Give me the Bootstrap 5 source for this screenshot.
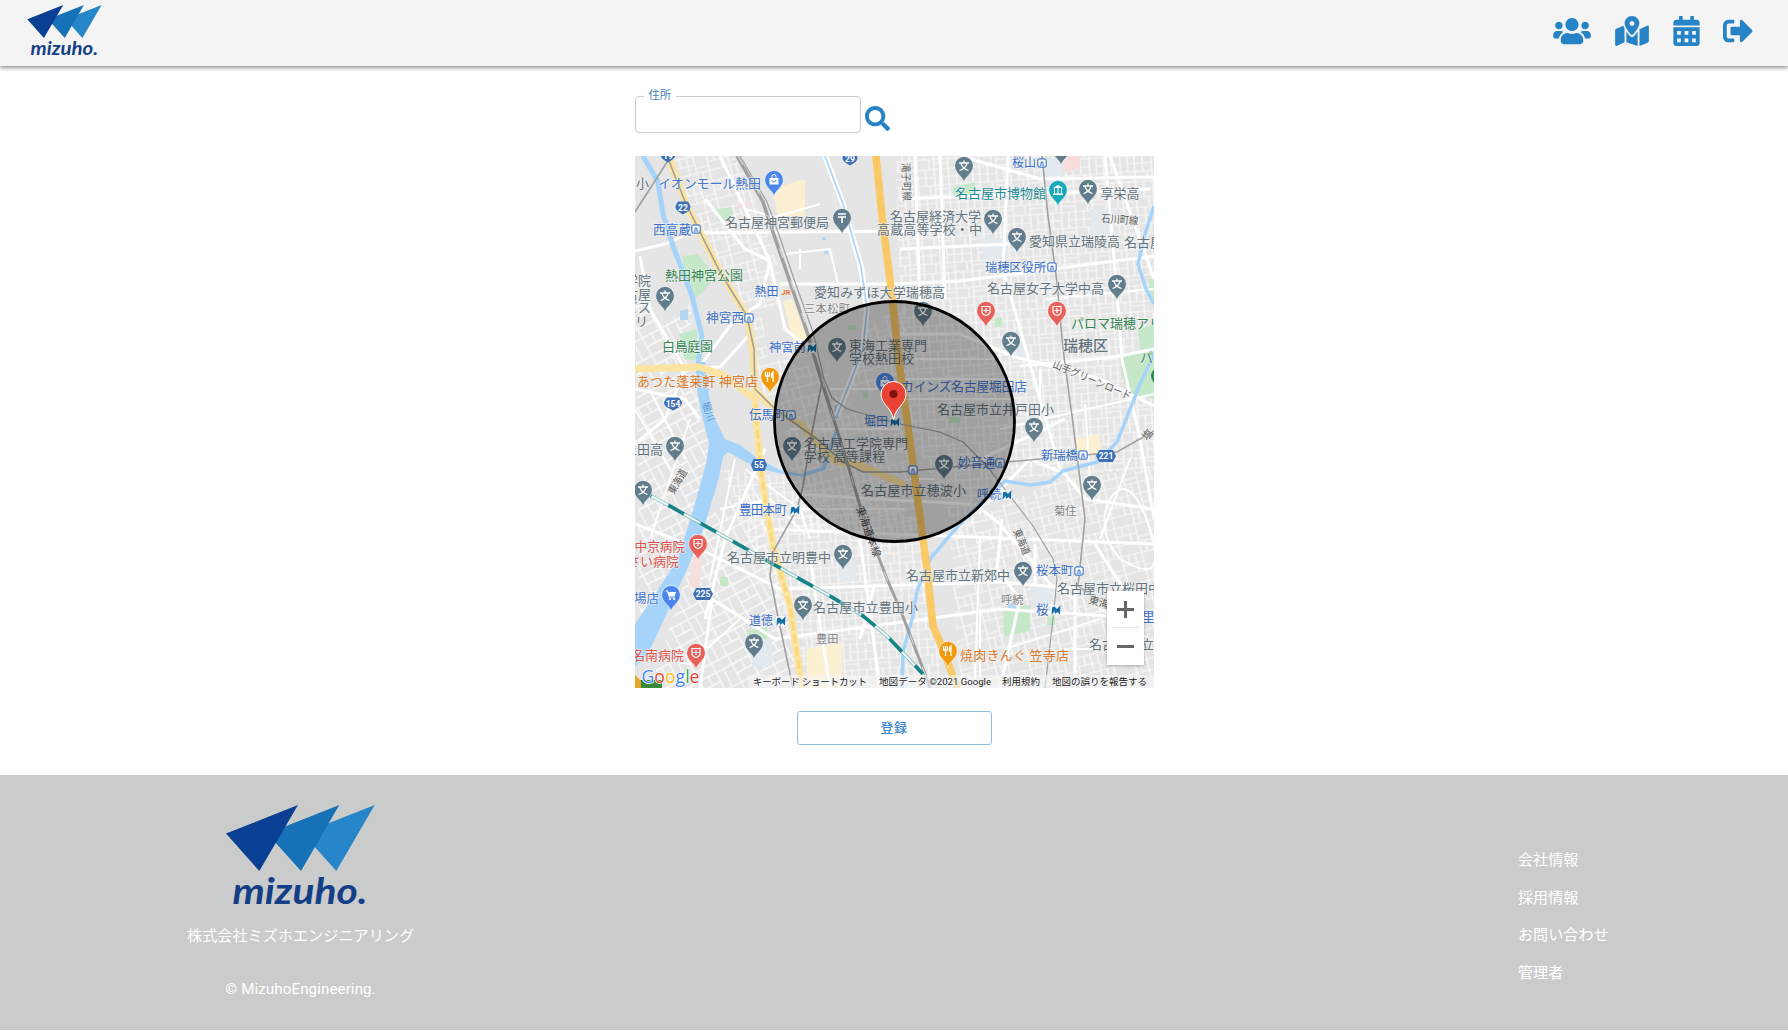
<!DOCTYPE html>
<html lang="ja">
<head>
<meta charset="utf-8">
<meta name="viewport" content="width=device-width, initial-scale=1">
<title>mizuho.</title>
<link rel="stylesheet" href="https://cdn.jsdelivr.net/npm/bootstrap@5.3.0/dist/css/bootstrap.min.css">
<style>
body{font-family:Roboto,"Noto Sans CJK JP",sans-serif;background:#fff;min-height:100vh}
.site-head{height:66px;background:#f4f4f4;box-shadow:0 2px 4px rgba(0,0,0,.42);padding:5px 35px 0 27px}
.site-head nav{gap:24px;padding-top:11px}
.site-head nav a:last-child{margin-left:-1px}
.site-head nav svg,.find-btn svg{display:block;fill:#2683c6}
.site-head nav svg{height:30px}
.site-main{width:519px;height:709px;padding-top:30px}
.addr{width:226px;height:37px;margin:0;min-width:0}
.addr fieldset{border:1px solid #ccc;border-radius:4px;height:43px;margin-top:-6px;padding:0 8px;min-width:0}
.addr legend{float:none;width:auto;font-size:11.3px;line-height:12px;height:12px;padding:0 5px;margin:0;color:#3c80bd}
.addr input{display:block;width:100%;height:28px;border:0;outline:0;background:transparent}
.find-btn{margin:10px 0 0 4px;padding:0;border:0;background:none}
.map-box{height:532px;margin-top:23px}
.map-box>svg{display:block}
.map-zoom{right:10px;bottom:23px;width:37px;height:74px;background:#fff;box-shadow:0 1px 3px rgba(0,0,0,.28)}
.map-zoom button{border:0;background:none;height:37px;padding:0}
.map-zoom button+button:before{content:"";position:absolute;left:5px;right:5px;top:36px;border-top:1px solid #e6e6e6}
.save-btn{width:195px;height:34px;margin-top:22.5px;border:1px solid #8fbde3;border-radius:3px;background:#fff;color:#3b86ca;font-size:13px;font-weight:500;letter-spacing:.6px;padding:0}
.site-foot{height:255px;background:#cacccb;color:#fff;padding:30px 0 0 187px}
.site-foot p{font-size:15.15px;line-height:24px}
.foot-name{margin-top:18px}
.foot-copy{margin-top:29px;letter-spacing:.09px}
.foot-menu{width:270px;padding-top:43px}
.foot-menu a{color:#fff;font-size:15.1px;line-height:24px;height:37.7px;text-decoration:none}
.lb{font:400 13px Roboto,"Noto Sans CJK JP",sans-serif;fill:#64747d;stroke:#f3f3f3;stroke-opacity:.6;stroke-width:1.8px;paint-order:stroke;stroke-linejoin:round}
.lb .st{fill:#3b70c6;font-size:12.6px}.lb .gr{fill:#348553}.lb .sh{fill:#4478d0}.lb .fd{fill:#d9792c}.lb .hp{fill:#d9534c}.lb .tl{fill:#1f8c98}
.lb .in{stroke-opacity:0}
.lb .rd{font-size:10.5px;fill:#606060}.lb .ar{font-size:11.3px;fill:#858585}.lb .wd{font-size:15px;font-weight:500}
.wy{fill:none;stroke:#fff;stroke-linejoin:round}
.rl{fill:none;stroke:#a0a0a0;stroke-width:1.6}
.wt{fill:none;stroke:#a6d3fa;stroke-linejoin:round}
.att{font:400 9.5px Roboto,"Noto Sans CJK JP",sans-serif;fill:#222;stroke:#f5f5f5;stroke-width:1.5px;paint-order:stroke}
.rt{font:bold 8.5px Roboto,sans-serif;fill:#fff;text-anchor:middle}
</style>
<script src="https://cdn.jsdelivr.net/npm/bootstrap@5.3.0/dist/js/bootstrap.bundle.min.js"></script>
</head>
<body class="d-flex flex-column">
<svg width="0" height="0" class="position-absolute" aria-hidden="true">
<defs>
<symbol id="logo" viewBox="0 0 149 101">
<path fill="#2785ca" d="M76.7 28.6 148.7 0 110.3 66z"/><path fill="#1671b7" d="M41.3 28.6 113.3 0 75 66z"/><path fill="#0a3f93" d="M0 28.6 72 0 33.3 66z"/>
<text x="6.500" y="99" textLength="135" lengthAdjust="spacingAndGlyphs" style="font:italic 700 37px Lato,sans-serif" fill="#143f88">mizuho.</text>
</symbol>
<path id="pin" d="M0 16.5C-1.2 10-9.3 7.500-9.300-.3A9.300 9.300 0 0 1 9.300-.3C9.300 7.500 1.200 10 0 16.500z" stroke="#fff" stroke-width=".6"/>
<g id="sc"><use href="#pin" fill="#627d8b"/><path d="M0-5.500V-3M-5-3H5M-3-2.500C-2 1 1 3.500 4.500 4.500M3-2.500C2 1-1 3.500-4.500 4.500" fill="none" stroke="#fff" stroke-width="1.300"/></g>
<g id="ho"><use href="#pin" fill="#e8605a"/><path d="M-4-4.500H4V1.500Q3 4 0 4.500Q-3 4-4 1.500zM0-3V2M-2.500-.5H2.500" fill="none" stroke="#fff" stroke-width="1.200"/></g>
<g id="fo"><use href="#pin" fill="#f29a0c"/><path d="M-2.500-5V5M-4.500-5V-1H-.5V-5M3 5V-5Q1-3 1.500 0H3" fill="none" stroke="#fff" stroke-width="1.300"/></g>
<g id="bg"><use href="#pin" fill="#4c86ea"/><path d="M-4.500-2H4.500V4.500H-4.500z" fill="#fff"/><path d="M-2-2V-3.500A2 2 0 0 1 2-3.500V-2" fill="none" stroke="#fff"/><path d="M-2 0A2 2 0 0 0 2 0" fill="none" stroke="#4c86ea"/></g>
<g id="ca"><use href="#pin" fill="#4c86ea"/><path d="M-5.500-4H-3.500L-1.500 2H4" fill="none" stroke="#fff" stroke-width="1.200"/><path d="M-3-3H5L3.500 1H-1.800z" fill="#fff"/><circle cx="-1" cy="4" r="1.100" fill="#fff"/><circle cx="3" cy="4" r="1.100" fill="#fff"/></g>
<g id="po"><use href="#pin" fill="#627d8b"/><path d="M-4-4H4M-4-1H4M0-1V5" fill="none" stroke="#fff" stroke-width="1.600"/></g>
<g id="mu"><use href="#pin" fill="#18aabb"/><path d="M-5-2 0-5 5-2zM-5 3.500H5V5H-5z" fill="#fff"/><path d="M-3.500-2V4M0-2V4M3.500-2V4" stroke="#fff"/></g>
<g id="su"><rect x="-4.200" y="-4.200" width="8.400" height="8.400" rx="2" fill="#fff" stroke="#4a7ccc" stroke-width="1.200"/><path d="M-2.300 2.300H-1V-.3A1.200 1.200 0 0 1 1-.3V2.300H2.300" fill="none" stroke="#4a7ccc" stroke-width="1.100"/></g>
<g id="me"><path d="M-5-5H5V5H-5z" fill="#fff" fill-opacity=".7"/><path d="M-4-2.500-1.500-3.500 1-1 4.500-5 4 4.500 1.500 2-1 4 -1.500 1-4.500 5z" fill="#1571a5"/></g>
<path id="sd" d="M-5-6.500H5L7.500-2Q7.500 2 4 4L0 6.500-4 4Q-7.500 2-7.500-2z" fill="#3d70b7"/>
<path id="hx" d="M-8 0-5.500-6H5.500L8 0 5.500 6H-5.500z" fill="#3d70b7"/>
<pattern id="ga" width="31" height="26" patternUnits="userSpaceOnUse" patternTransform="translate(3 0) rotate(-4)"><path d="M0 1H31M0 9H18M0 17H31M18 21H31M1 0V26M9 1V17M18 0V26M25 0V17M13 17V26M25 9H31" fill="none" stroke="#fafafa" stroke-width="1.200"/></pattern>
<pattern id="gb" width="34" height="29" patternUnits="userSpaceOnUse" patternTransform="rotate(-14)"><path d="M0 1H34M0 10H22M0 19H34M22 14H34M1 0V29M8 1V10M15 0V19M22 0V29M28 19V29" fill="none" stroke="#fafafa" stroke-width="1.200"/></pattern>
<pattern id="gc" width="37" height="30" patternUnits="userSpaceOnUse" patternTransform="rotate(-28)"><path d="M0 1H37M0 11H20M0 21H37M1 0V30M11 0V11M20 0V30M28 1V21" fill="none" stroke="#fafafa" stroke-width="1.300"/></pattern>
</defs>
</svg>

<header class="site-head d-flex justify-content-between align-items-start position-relative">
<a href="#" aria-label="mizuho"><svg class="d-block" width="75" height="50.500"><use href="#logo"/></svg></a>
<nav class="d-flex">
<a href="#"><svg viewBox="0 0 640 512" width="38"><path d="M96 224c35.300 0 64-28.700 64-64s-28.700-64-64-64-64 28.700-64 64 28.700 64 64 64zm448 0c35.300 0 64-28.700 64-64s-28.700-64-64-64-64 28.700-64 64 28.700 64 64 64zm32 32h-64c-17.600 0-33.500 7.100-45.100 18.600 40.300 22.100 68.900 62 75.100 109.400h66c17.700 0 32-14.300 32-32v-32c0-35.300-28.700-64-64-64zm-256 0c61.900 0 112-50.100 112-112S381.900 32 320 32 208 82.100 208 144s50.100 112 112 112zm76.800 32h-8.300c-20.800 10-43.900 16-68.500 16s-47.600-6-68.500-16h-8.300C179.600 288 128 339.600 128 403.200V432c0 26.500 21.500 48 48 48h288c26.500 0 48-21.500 48-48v-28.800c0-63.600-51.600-115.200-115.200-115.200zm-223.700-13.400C161.500 263.100 145.600 256 128 256H64c-35.300 0-64 28.700-64 64v32c0 17.700 14.300 32 32 32h65.900c6.300-47.400 34.900-87.300 75.200-109.400z"/></svg></a>
<a href="#"><svg viewBox="0 0 576 512" width="34"><path d="M288 0c-69.590 0-126 56.410-126 126 0 56.260 82.350 158.800 113.900 196.020 6.390 7.540 17.820 7.540 24.200 0C331.650 284.800 414 182.260 414 126 414 56.410 357.590 0 288 0zm0 168c-23.200 0-42-18.800-42-42s18.800-42 42-42 42 18.800 42 42-18.800 42-42 42zM20.120 215.950A32.006 32.006 0 0 0 0 245.660v250.320c0 11.320 11.430 19.060 21.940 14.860L160 448V214.920c-8.840-15.980-16.070-31.540-21.250-46.420L20.120 215.950zM288 359.670c-14.070 0-27.380-6.180-36.510-16.960-19.660-23.200-40.570-49.620-59.490-76.720v182l192 64V266c-18.920 27.090-39.820 53.520-59.490 76.720-9.130 10.770-22.440 16.950-36.510 16.950zm266.060-198.510L416 224v288l139.880-55.950A31.996 31.996 0 0 0 576 426.340V176.020c0-11.320-11.430-19.060-21.940-14.860z"/></svg></a>
<a href="#"><svg viewBox="0 0 448 512" width="27"><path fill-rule="evenodd" d="M0 464c0 26.500 21.500 48 48 48h352c26.500 0 48-21.500 48-48V192H0zM64 256h64v64H64zm128 0h64v64h-64zm128 0h64v64h-64zM64 384h64v64H64zm128 0h64v64h-64zm128 0h64v64h-64zM400 64h-48V16c0-8.800-7.200-16-16-16h-32c-8.800 0-16 7.200-16 16v48H160V16c0-8.800-7.200-16-16-16h-32c-8.800 0-16 7.200-16 16v48H48C21.500 64 0 85.500 0 112v48h448v-48c0-26.500-21.500-48-48-48z"/></svg></a>
<a href="#"><svg viewBox="0 0 512 512" width="30"><path d="M497 273L329 441c-15 15-41 4.500-41-17v-96H152c-13.300 0-24-10.700-24-24v-96c0-13.300 10.700-24 24-24h136V88c0-21.400 25.900-32 41-17l168 168c9.300 9.400 9.300 24.600 0 34zM192 436v-40c0-6.600-5.400-12-12-12H96c-17.700 0-32-14.300-32-32V160c0-17.700 14.300-32 32-32h84c6.600 0 12-5.400 12-12V76c0-6.600-5.400-12-12-12H96c-53 0-96 43-96 96v192c0 53 43 96 96 96h84c6.600 0 12-5.400 12-12z"/></svg></a>
</nav>
</header>

<main class="site-main mx-auto d-flex flex-column flex-shrink-0">
<form class="d-flex align-items-start">
<label class="addr"><fieldset><legend>住所</legend><input type="text" aria-label="住所"></fieldset></label>
<button type="button" class="find-btn" aria-label="検索"><svg viewBox="0 0 512 512" width="25" height="25"><path d="M505 442.700L405.300 343c-4.500-4.500-10.600-7-17-7H372c27.600-35.300 44-79.700 44-128C416 93.100 322.900 0 208 0S0 93.100 0 208s93.100 208 208 208c48.300 0 92.700-16.400 128-44v16.300c0 6.400 2.500 12.500 7 17l99.700 99.700c9.400 9.400 24.600 9.400 33.900 0l28.300-28.300c9.400-9.400 9.400-24.600.1-34zM208 336c-70.700 0-128-57.200-128-128 0-70.700 57.200-128 128-128 70.700 0 128 57.200 128 128 0 70.700-57.200 128-128 128z"/></svg></button>
</form>

<div class="map-box position-relative overflow-hidden flex-shrink-0">
<svg width="519" height="532" viewBox="635 157 519 532">
<rect x="635" y="157" width="519" height="532" fill="#e5e5e5"/>
<!-- small streets -->
<path fill="url(#ga)" d="M895 157H1154V470L1010 480 960 540 905 420zM720 470 800 480 920 520 945 689H810z"/>
<path fill="url(#gb)" d="M672 157H740L790 300 820 400 760 400 745 310 690 210zM780 400 905 300 920 540 800 530zM950 530 1060 480 1154 470V689H960z"/>
<path fill="url(#gc)" d="M635 280 690 300 700 420 720 450 640 640zM705 520 760 480 800 689H650z"/>
<!-- blocks, parks and campuses -->
<g fill="#e5e5e5"><path d="M776 240 838 235 860 283H792zM800 170 828 168 842 225H778zM640 255 672 250 694 300 660 330 642 290zM760 310 785 305 803 345 770 365zM825 345 860 340 850 400 832 395zM850 395 890 390V420L850 410z"/></g>
<g fill="#fbf1d2"><path d="M772 190 805 180V217H778zM806 650 842 643V689H808zM783 303 792 300 812 350 798 358zM1075 440 1100 435V455H1075z"/></g>
<g fill="#e2e9ef"><path d="M980 240H1008V258L985 262zM1090 210H1115V235H1090zM1010 345 1028 340V362H1012zM1030 583 1050 585V605H1032zM840 565 855 562V582H840zM750 635 772 632V667H752zM1045 160H1062V177H1045z"/></g>
<g fill="#c5e8c9"><path d="M682 257 697 255 716 277 704 292 694 300 687 285zM716 210 732 208V220L718 222zM679 335 697 330 698 362 684 360zM1122 357 1154 352V400L1130 395 1121 375zM1138 330 1154 325V352H1140zM1003 610 1030 606V632L1004 638zM953 188 975 183V197H953zM720 578H728V587H720zM1047 618 1055 617V626H1047zM747 632 767 628V640H747zM1149 280H1154V300H1149zM995 320 1002 318V328H995zM848 326H856V331H848zM949 418H960V424H949zM863 393H868V400H863z"/></g>
<g fill="#f7dedd"><path d="M1063 157H1080V170L1065 173zM693 556 703 552 699 590 689 587zM738 205 750 202V207L738 210z"/></g>
<g fill="#b0d6f4"><path d="M680 312 688 310V321H680zM822 238H826V241H822zM824 252H828V255H824zM1008 607Q1013 600 1016 607T1008 610M834 407 842 403 840 418 835 420z"/></g>
<!-- main streets -->
<g class="wy" stroke-width="3">
<path d="M635 252 665 245 690 234 905 232M780 285H893L960 282 1154 257M705 200 745 250 770 262 785 330 810 350M720 157 770 262 760 305 735 320 700 367M640 257 650 310 685 370 665 420 635 445M635 525 700 550 780 590 1000 583 1080 590M705 620 725 540 765 450M765 530 1154 545M1105 157 1115 270 1122 360 1140 440 1154 520M960 157 1040 180 1154 178M900 335 960 335 1015 358 1100 380 1154 407M1020 367 1115 358 1154 350M1008 157 1003 270 1030 365 1060 470M690 370 720 368 750 335M990 502 1030 460 1065 475 1085 500 1154 510M975 505 1000 525 1050 585 1075 600M800 495 875 500 970 505M810 560 830 689M860 540 880 689M700 689 712 600 775 640 1000 610 1154 620M960 470 1065 420M1075 590 1075 689M1095 545 1130 600M1002 520 997 570 1020 600 1000 689M635 390 685 400 700 420M900 200 1150 190M900 250 1010 245M1110 157 1154 280M940 157 945 300M915 157 920 305M1035 545V585M875 585 860 640"/>
</g>
<g class="wy" stroke-width="2"><path d="M1045 300 1154 290M1000 430 1154 395M1100 610 1150 640M980 540 975 680M1110 500Q1130 470 1150 530T1120 560Q1095 530 1110 500M1005 650 1100 620M980 610V689M1130 460 1100 540M635 410 670 470M652 395 685 460M650 540 690 420M735 460 710 580M745 470 800 510 810 540M635 655 690 665 740 620M720 510 770 500 800 530M820 205 775 218 745 210M785 255 830 250 838 285M800 270V250M935 480 910 480M1085 405 1090 480M1040 370V430M1060 650H1100M900 380H1010M905 400H1010M910 360H995M790 430H900M780 450H910M830 390H890M800 510H905"/></g>
<!-- water -->
<path class="wt" stroke-width="5" d="M643 157 658 183 663 215 673 247 692 297 702 337 698 367 703 410"/>
<path fill="#a6d3fa" d="M696 363H705L711 412 725 440 740 446 757 459 780 471 800 475 822 468 835 430 838 432 825 471 803 478 778 474 755 468 728 453 723 458 718 482 702 535 684 577 648 655 635 668V625L652 600 678 560 692 515 706 465 709 445 701 412 697 390z"/>
<path class="wy" stroke-width="6" d="M825 157 843 205 861 268 867 310 863 350 837 417"/>
<path class="wt" stroke-width="1.600" d="M825 157 843 205 861 268 867 310 863 350 837 417"/>
<path class="wt" stroke-width="3.500" d="M1127 418 1117 443 1097 463 1063 472 1050 483 1030 486 1005 482 985 500 957 528 930 560 917 592 912 620 903 653 902 689M1154 207 1145 235 1138 265 1146 290 1154 305M1154 355 1140 385 1127 418"/>
<!-- trunk roads -->
<g fill="none" stroke-linejoin="round">
<path stroke="#fbe3a0" stroke-width="7" d="M668 157 687 207 720 273 747 317 753 350 755 390 775 412 800 425 835 462 862 467 905 486M635 370 700 368 725 377 755 400 756 420 762 480 773 547 790 607 802 689"/>
<path stroke="#fad87e" stroke-width="3" stroke-dasharray="9 4" d="M756 405V420L762 480 773 547 790 607 802 689"/>
<path stroke="#fbcb69" stroke-width="7.500" d="M876 157 882 217 892 297 899 363 907 420 918 503 927 570 933 627 945 655 957 689"/>
<path stroke="#f3bc50" stroke-width="7.500" stroke-dasharray="14 7" stroke-opacity=".2" d="M876 157 882 217 892 297 899 363 907 420 918 503 927 570 933 627 945 655 957 689"/>
</g>
<!-- railways -->
<g class="rl">
<path d="M667 157 686 205 720 273 747 317 754 350 755 390 773 408 793 423 817 440 843 463 863 473 900 473 1007 463 1117 453 1154 432M669 160 635 213"/>
<path stroke-width="3.500" d="M737 157 763 203 773 233 790 283 807 333 820 377 832 415"/>
<path stroke-width="1.200" d="M740 157 767 203 778 233 795 283 813 333 824 380 832 399 847 410 895 424 940 433 963 443 987 467 1007 493 1033 527 1053 560 1057 580 1053 620 1045 689"/>
<path stroke-width="3" d="M832 415 847 463 863 517 887 580 900 610 927 680 930 689"/>
<path stroke="#e0e0e0" stroke-width="1" stroke-dasharray="10 24" d="M738 157 764 203 774 233 791 283 808 333 821 377 832 415 847 463 863 517 887 580 900 610 927 680"/>
<path d="M822 383 812 433 803 487 797 510 773 553 770 577 777 613 793 689M1042 157 1048 217 1057 283 1063 350 1072 417 1085 520 1078 587 1107 607"/>
</g>
<path fill="none" stroke="#78b9ba" stroke-width="3.500" d="M647 495 668 506 750 552 773 565 830 597 863 617 887 637 923 675"/>
<path fill="none" stroke="#f0f8f8" stroke-width="2" d="M647 495 668 506 750 552 773 565 830 597 863 617 887 637 923 675"/>
<path fill="none" stroke="#168486" stroke-width="3.500" stroke-dasharray="18 19" stroke-dashoffset="13" d="M647 495 668 506 750 552 773 565 830 597 863 617 887 637 923 675"/>
<!-- route shields -->
<use href="#sd" x="668" y="157"/><use href="#sd" x="850" y="160"/><use href="#sd" x="683" y="209"/><use href="#sd" transform="translate(673 405) scale(1.200 1)"/><use href="#hx" x="759" y="466"/><use href="#hx" transform="translate(703 595) scale(1.250 1)"/><use href="#hx" transform="translate(1106 457) scale(1.250 1)"/>
<g class="rt"><text x="668" y="160">19</text><text x="850" y="163">29</text><text x="683" y="212">22</text><text x="673" y="408">154</text><text x="759" y="469">55</text><text x="703" y="598">225</text><text x="1106" y="460">221</text></g>
<!-- place names -->
<g class="lb">
<text x="636" y="189">小</text><text class="sh" x="658" y="189" textLength="103">イオンモール熱田</text>
<text x="725" y="228" textLength="104">名古屋神宮郵便局</text>
<text class="st" x="653" y="235" textLength="38">西高蔵</text><text class="gr" x="665" y="281" textLength="78">熱田神宮公園</text>
<text x="625" y="286">学院</text><text x="625" y="300">古屋</text><text x="625" y="313">ビス</text><text x="622" y="327">ャリ</text>
<text class="st" x="754.500" y="297" style="font-size:12px">熱田</text><text x="814" y="298" textLength="131">愛知みずほ大学瑞穂高</text><text class="ar" x="804" y="314" textLength="46">三本松町</text>
<text class="st" x="706" y="323" textLength="38">神宮西</text><text class="gr" x="662" y="352" textLength="51">白鳥庭園</text><text class="st" x="769" y="353" style="font-size:12.3px">神宮前</text>
<text class="in" x="849" y="351" textLength="78">東海工業専門</text><text class="in" x="849" y="364" textLength="65">学校熱田校</text>
<text class="fd" x="637" y="387" textLength="121">あつた蓬莱軒 神宮店</text><text class="st" x="749" y="420" textLength="37">伝馬町</text>
<text class="sh in" x="901" y="392" textLength="126">カインズ名古屋堀田店</text><text class="in" x="937" y="415" textLength="117">名古屋市立井戸田小</text><text class="st in" x="864" y="427" style="font-size:12px">堀田</text>
<text class="in" x="804" y="449" textLength="104">名古屋工学院専門</text><text class="in" x="804" y="462" textLength="81">学校 高等課程</text><text class="st in" x="958" y="468" textLength="37">妙音通</text><text class="in" x="861" y="496" textLength="105">名古屋市立穂波小</text><text class="st" x="977" y="500" style="font-size:12px">呼続</text>
<text x="624" y="455">上田高</text><text class="st" x="739" y="515" textLength="48">豊田本町</text>
<text class="hp" x="634.500" y="552" style="font-size:12.700px">中京病院</text><text class="hp" x="627" y="567" textLength="52">さい病院</text><text x="727" y="563" textLength="104">名古屋市立明豊中</text>
<text class="sh" x="634" y="604" style="font-size:12.500px">場店</text><text class="st" x="749" y="626" style="font-size:12px">道徳</text><text x="813" y="613" textLength="105">名古屋市立豊田小</text><text class="ar" x="816" y="644">豊田</text><text class="hp" x="632" y="661" textLength="52">名南病院</text>
<text class="st" x="1012" y="168" style="font-size:12px">桜山</text><text class="tl" x="955" y="199" textLength="91">名古屋市博物館</text><text x="1100.500" y="199">享栄高</text>
<text x="890" y="222" textLength="91">名古屋経済大学</text><text x="877" y="235" textLength="105">高蔵高等学校・中</text>
<text x="1029" y="247" textLength="91">愛知県立瑞陵高</text><text x="1124" y="248">名古屋</text><text class="st" x="985" y="273" style="font-size:12.200px">瑞穂区役所</text><text x="987" y="294" textLength="117">名古屋女子大学中高</text>
<text class="gr" x="1071" y="329">パロマ瑞穂アリーナ</text><text class="wd" x="1063" y="352">瑞穂区</text><text class="gr" x="1140" y="363">パロ</text>
<text class="st" x="1041" y="461" style="font-size:12.300px">新瑞橋</text><text class="ar" x="1054" y="516">菊住</text><text x="906" y="581" textLength="104">名古屋市立新郊中</text><text class="st" x="1036" y="576" style="font-size:12.400px">桜本町</text>
<text x="1057" y="594" textLength="104">名古屋市立桜田中</text><text class="ar" x="1001" y="605">呼続</text><text class="st" x="1036" y="615">桜</text><text x="1089" y="650">名古屋市立</text><text class="st" x="1142" y="622">里</text>
<text class="fd" x="960" y="661" textLength="109">焼肉きんぐ 笠寺店</text>
<text class="rd" transform="translate(902 164) rotate(88)" textLength="38" lengthAdjust="spacingAndGlyphs">滝子町線</text>
<text class="rd" transform="translate(1101 223) rotate(4)" textLength="37" lengthAdjust="spacingAndGlyphs">石川町線</text>
<text class="rd" transform="translate(1052 368) rotate(23)" textLength="84" lengthAdjust="spacingAndGlyphs">山手グリーンロード</text>
<text class="rd" transform="translate(674 496) rotate(-60)" textLength="27" lengthAdjust="spacingAndGlyphs">東海道</text>
<text class="rd" transform="translate(856 509) rotate(70)" textLength="53" style="fill:#444">東海道本線</text>
<text class="rd" transform="translate(1013 532) rotate(66)" textLength="27" lengthAdjust="spacingAndGlyphs">東海道</text>
<text class="rd" transform="translate(1088 604) rotate(15)">東海道</text>
<text class="rd" transform="translate(1147 442) rotate(-50)">塩</text>
<text class="rd" transform="translate(702 404) rotate(72)" style="fill:#5b9bd0;stroke:none;font-size:10px">堀川</text>
</g>
<g><use href="#su" x="696" y="230"/><use href="#su" x="749" y="319"/><use href="#su" x="791" y="416"/><use href="#su" x="1042" y="164"/><use href="#su" x="1052" y="268"/><use href="#su" x="1000" y="464"/><use href="#su" x="913" y="471"/><use href="#su" x="1083" y="456"/><use href="#su" x="1079" y="572"/>
<use href="#me" x="812" y="349"/><use href="#me" x="895" y="423"/><use href="#me" x="1007" y="496"/><use href="#me" x="795" y="511"/><use href="#me" x="781" y="622"/><use href="#me" x="1056" y="611"/></g>
<text x="781" y="296" font-family="Roboto" font-size="8" font-weight="700" fill="#e57a35">JR</text>
<!-- places -->
<use href="#bg" x="774" y="181"/><use href="#po" x="842" y="219"/><use href="#fo" x="770" y="378"/><use href="#bg" x="885" y="383"/><use href="#mu" x="1058" y="191"/><use href="#fo" x="948" y="652"/><use href="#ca" x="671" y="596"/>
<use href="#ho" x="986" y="312"/><use href="#ho" x="1057" y="312"/><use href="#ho" x="698" y="545"/><use href="#ho" x="696" y="654"/>
<use href="#sc" x="665" y="297"/><use href="#sc" x="837" y="348"/><use href="#sc" x="964" y="167"/><use href="#sc" x="1061" y="150"/><use href="#sc" x="1088" y="190"/><use href="#sc" x="993" y="220"/><use href="#sc" x="1017" y="238"/><use href="#sc" x="1117" y="285"/><use href="#sc" x="1011" y="342"/><use href="#sc" x="923" y="312"/><use href="#sc" x="1034" y="428"/><use href="#sc" x="944" y="465"/><use href="#sc" x="1092" y="486"/><use href="#sc" x="1023" y="572"/><use href="#sc" x="675" y="447"/><use href="#sc" x="643" y="491"/><use href="#sc" x="792" y="447"/><use href="#sc" x="843" y="555"/><use href="#sc" x="803" y="606"/><use href="#sc" x="754" y="644"/>
<circle cx="1160" cy="377" r="9" fill="#2f8f4e"/>
<!-- selected area -->
<circle cx="894.500" cy="422.500" r="120" fill="#000" fill-opacity=".3" stroke="#000" stroke-width="2.800"/>
<path d="M893.500 421C892 408 881 406 881 395A12.500 12.500 0 0 1 906 395C906 406 895 408 893.500 421z" fill="#ea4335" stroke="#fff" stroke-width="1"/><circle cx="893.500" cy="395" r="4" fill="#811411"/>
<!-- attribution -->
<path fill="#378a3a" d="M639 681H662V689H639z"/><path fill="#e9a42c" d="M635 676 641 682V689H635z"/>
<text x="641.500" y="684" textLength="58" lengthAdjust="spacingAndGlyphs" font-family="Open Sans" font-size="19" font-weight="500" stroke="#fff" stroke-width="1.500" paint-order="stroke" fill="#4285f4">G<tspan fill="#ea4335">o</tspan><tspan fill="#fbbc05">o</tspan>g<tspan fill="#34a853">l</tspan><tspan fill="#ea4335">e</tspan></text>
<path fill="#f5f5f5" fill-opacity=".6" d="M748 676H1154V689H748z"/>
<g class="att"><text x="753" y="685.500" textLength="114">キーボード ショートカット</text><text x="879" y="685.500" textLength="112" lengthAdjust="spacingAndGlyphs">地図データ ©2021 Google</text><text x="1002" y="685.500" textLength="38">利用規約</text><text x="1052" y="685.500" textLength="95">地図の誤りを報告する</text></g>
</svg>
<div class="map-zoom position-absolute d-flex flex-column">
<button type="button" aria-label="拡大"><svg class="d-block mx-auto" width="17" height="17"><path d="M0 8.500H17M8.500 0V17" stroke="#666" stroke-width="3"/></svg></button>
<button type="button" aria-label="縮小"><svg class="d-block mx-auto" width="17" height="17"><path d="M0 8.500H17" stroke="#666" stroke-width="3"/></svg></button>
</div>
</div>
<button type="button" class="save-btn align-self-center">登録</button>
</main>

<footer class="site-foot d-flex justify-content-between flex-shrink-0">
<div class="text-center">
<svg class="d-block mx-auto" width="149" height="101"><use href="#logo"/></svg>
<p class="foot-name mb-0 text-nowrap">株式会社ミズホエンジニアリング</p>
<p class="foot-copy mb-0">© MizuhoEngineering.</p>
</div>
<nav class="foot-menu d-flex flex-column">
<a href="#">会社情報</a><a href="#">採用情報</a><a href="#">お問い合わせ</a><a href="#">管理者</a>
</nav>
</footer>
</body>
</html>
